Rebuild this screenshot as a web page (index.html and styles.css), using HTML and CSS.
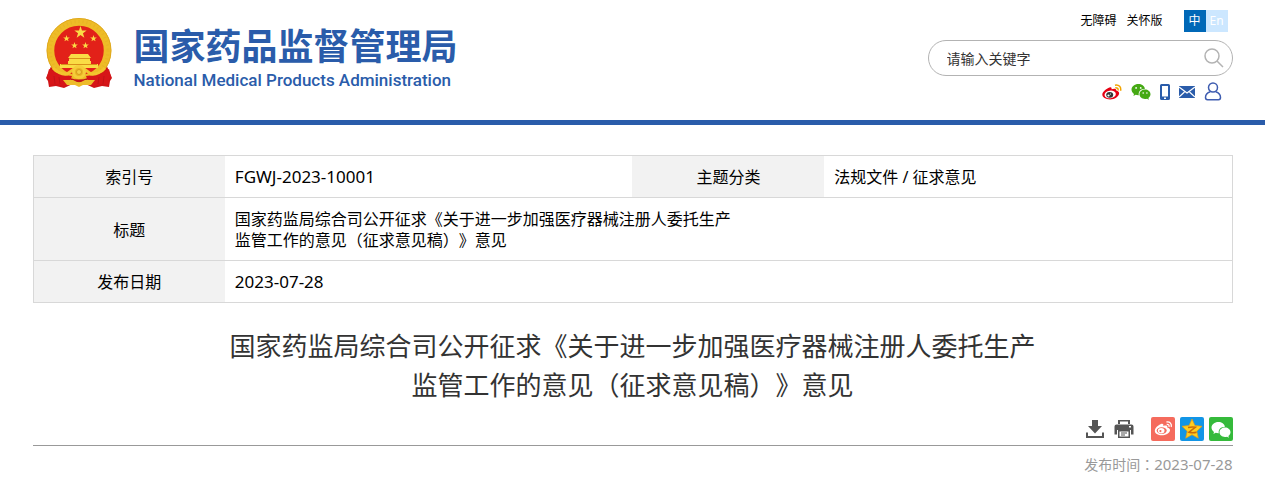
FILE: index.html
```html
<!DOCTYPE html>
<html lang="zh-CN">
<head>
<meta charset="utf-8">
<meta name="viewport" content="width=device-width, initial-scale=1">
<title>国家药品监督管理局</title>
<link rel="stylesheet" href="styles.css">
</head>
<body>
<svg class="sprite" aria-hidden="true">
  <symbol id="star" viewBox="-10 -10 20 20"><path d="M0-10 2.3-3.2 9.5-3.1 3.8 1.2 5.9 8.1 0 4-5.9 8.1-3.8 1.2-9.5-3.1-2.3-3.2z"/></symbol>
  <symbol id="wechat" viewBox="0 0 20 17">
    <path fill="currentColor" d="M7.400 1C3.500 1 .5 3.500.5 6.600c0 1.800 1 3.300 2.500 4.400l-.6 2 2.300-1.200c.8.300 1.700.4 2.600.4h.5C7 8.500 10 5.700 14 5.700 13.400 3 10.700 1 7.400 1z"/>
    <path fill="currentColor" d="M19.500 11.300c0-2.600-2.500-4.700-5.500-4.700s-5.500 2.100-5.500 4.700S11 16 14 16c.7 0 1.400-.1 2-.3l1.900 1-.5-1.700c1.300-.9 2.100-2.200 2.100-3.700z"/>
    <g class="eyes"><circle cx="5.100" cy="4.900" r=".9"/><circle cx="9.700" cy="4.900" r=".9"/><circle cx="12.200" cy="10" r=".8"/><circle cx="15.900" cy="10" r=".8"/></g>
  </symbol>
</svg>

<header class="site-header">
  <div class="wrap header-row">
    <a class="brand" href="#">
      <svg class="emblem" viewBox="0 0 66 70" aria-hidden="true">
        <path fill="#cf1417" d="M6 46 0 60l2 3 1 6 7-1 8 2 15-7 15 7 8-2 7 1 1-6 2-3-6-14z"/>
        <circle cx="33" cy="32.500" r="28.500" fill="#e22119" stroke="#eebc27" stroke-width="7.500"/>
        <circle cx="33" cy="32.500" r="32" fill="none" stroke="#dfa81e" stroke-width="1"/>
        <circle cx="33" cy="32.500" r="29" fill="none" stroke="#d9a01a" stroke-width="3" stroke-dasharray="1 3" opacity=".25"/>
        <g fill="#fadc45">
          <use href="#star" x="28" y="8" width="13" height="13"/>
          <use href="#star" x="17" y="17" width="7" height="7"/>
          <use href="#star" x="44" y="17" width="7" height="7"/>
          <use href="#star" x="25" y="24" width="7" height="7"/>
          <use href="#star" x="36" y="24" width="7" height="7"/>
          <path d="M25 36h17l3 4H22zM23 41h21v2H23zM22 43h23v3h7v4H14v-4h8z"/>
        </g>
        <path stroke="#d99119" stroke-width="1" d="M23 40.500h21M15 46.500h36"/>
        <path fill="#d71518" d="m3 51 6 3 9 3 8 1-3 8-5 2-8-2-6 1-1-6-2-2zM63 51l-6 3-9 3-8 1 3 8 5 2 8-2 6 1 1-6 2-2z"/>
        <path fill="none" stroke="#f3c42e" stroke-width="3" d="M7 50q7 7 14 6l7-5M59 50q-7 7-14 6l-7-5"/>
        <circle cx="33" cy="54" r="5.500" fill="#e9b524" stroke="#f5cd3a" stroke-width="3"/>
        <circle cx="33" cy="54" r="2.500" fill="#f5cf42" stroke="#d89c1d"/>
        <path fill="#c41518" d="M24 60q9 3 18 0l-2 4H26z"/>
        <path fill="#eebc2b" d="m17 62 10 0 6 3 6-3h10l-4 5-8 0-4 2-4-2-8 0z"/>
        <path fill="none" stroke="#b01116" stroke-width=".6" d="m8 58 1 8M13 59l1 7M58 58l-1 8M53 59l-1 7"/>
      </svg>
      <span class="brand-text">
        <span class="brand-cn">国家药品监督管理局</span>
        <span class="brand-en">National Medical Products Administration</span>
      </span>
    </a>
    <div class="tools">
      <nav class="top-links">
        <a href="#">无障碍</a>
        <a href="#">关怀版</a>
        <span class="lang"><a class="lang-cn" href="#">中</a><a class="lang-en" href="#">En</a></span>
      </nav>
      <form class="search">
        <input class="search-input" type="text" placeholder="请输入关键字" aria-label="请输入关键字">
        <button class="search-btn" type="button" aria-label="搜索">
          <svg width="20" height="20" viewBox="0 0 20 20" fill="none" stroke="#b3b3b3" stroke-width="1.500"><circle cx="8" cy="8" r="7"/><path d="m13 13 6 6"/></svg>
        </button>
      </form>
      <div class="social">
        <a href="#" aria-label="微博"><svg width="20" height="16" viewBox="0 0 20 16">
          <path fill="#e60012" d="M7.500 3.500C9 2.900 10 3.600 9.500 5.300c2.500-1 5-.9 4.800 1.300 2 .5 3 1.500 2.800 3-.4 3.400-4.600 5.900-9 5.900S.3 13.500.3 10.600c0-2.700 4-6.100 7.200-7.100z"/>
          <ellipse cx="8.200" cy="10.500" rx="5.700" ry="3.800" fill="#fff" transform="rotate(-8 8 10.500)"/>
          <ellipse cx="7.700" cy="10.800" rx="3.500" ry="2.900" fill="#333"/><circle cx="6.500" cy="11.500" r="1.100" fill="#fff"/><circle cx="8.500" cy="10" r=".6" fill="#fff"/>
          <path fill="none" stroke="#f2a400" stroke-width="1.500" d="M13 1.200c4-.8 6.500 2 5.500 5.600M13.300 3.800c2-.3 3.200.9 2.700 2.700"/>
        </svg></a>
        <a class="green" href="#" aria-label="微信"><svg width="20" height="17"><use href="#wechat"/></svg></a>
        <a href="#" aria-label="移动客户端"><svg width="10" height="16" viewBox="0 0 10 16"><path fill="#2a5caa" fill-rule="evenodd" d="M1.500 0h7Q10 0 10 1.500v13Q10 16 8.500 16h-7Q0 16 0 14.500v-13Q0 0 1.500 0zM2 2v10.500h6V2zM4 13.500V15h2v-1.500z"/></svg></a>
        <a href="#" aria-label="邮箱"><svg width="16" height="12" viewBox="0 0 16 12"><path fill="#2a5caa" d="M0 0h16v12H0z"/><path fill="none" stroke="#fff" stroke-width="1.200" d="m0 1 8 6 8-6M0 11l5.500-5M16 11l-5.500-5"/></svg></a>
        <a href="#" aria-label="个人中心"><svg width="18" height="19" viewBox="0 0 18 19" fill="none" stroke="#3f5db0" stroke-width="1.500"><circle cx="9" cy="5.500" r="4.500"/><path d="M6.300 9.700C3.500 10.500 1.500 12.500 1.500 15.500c0 1.500.8 2.200 2 2.200h11c1.200 0 2-.7 2-2.200 0-3-2-5-4.800-5.800"/></svg></a>
      </div>
    </div>
  </div>
</header>

<main class="wrap">
  <table class="info">
    <colgroup><col class="col-label"><col class="col-value"><col class="col-label"><col class="col-value"></colgroup>
    <tbody>
      <tr><th scope="row">索引号</th><td class="latin">FGWJ-2023-10001</td><th scope="row">主题分类</th><td>法规文件 / 征求意见</td></tr>
      <tr><th scope="row">标题</th><td colspan="3">国家药监局综合司公开征求《关于进一步加强医疗器械注册人委托生产<br>监管工作的意见（征求意见稿）》意见</td></tr>
      <tr><th scope="row">发布日期</th><td class="latin" colspan="3">2023-07-28</td></tr>
    </tbody>
  </table>

  <h1 class="title">国家药监局综合司公开征求《关于进一步加强医疗器械注册人委托生产<br>监管工作的意见（征求意见稿）》意见</h1>

  <div class="actions">
    <div class="doc-actions">
      <button type="button" aria-label="下载"><svg width="20" height="20" viewBox="0 0 20 20" fill="#555"><path d="M7 1h6v6h4l-7 7.500L3 7h4z"/><path d="M1 13.500h2V17h14v-3.500h2V19H1z"/></svg></button>
      <button type="button" aria-label="打印"><svg width="20" height="20" viewBox="0 0 20 20" fill="#555"><path fill-rule="evenodd" d="M4 1h12v4H4zM6 2.500V5h8V2.500z"/><path fill-rule="evenodd" d="M2.500 5.500h15Q19.500 5.500 19.500 7.500v8H17V11H3v4.500H.5v-8q0-2 2-2zM15 7v1.500h2V7z"/><path fill-rule="evenodd" d="M4 11h12v8H4zM5.500 12.500v5h9v-5z"/><path d="M7 13.500h6v1H7zM7 15.500h4v1H7z"/></svg></button>
    </div>
    <div class="share">
      <a class="share-weibo" href="#" aria-label="分享到微博"><svg width="24" height="24" viewBox="0 0 24 24">
        <path fill="#fff" d="M10 7c1.800-.7 2.800.1 2.300 2 2.500-.9 4.500-.6 4 1.500 2 .6 3 1.500 2.700 3-.5 3-4.500 4.800-8.200 4.800-3.800 0-7-1.600-7-4.500C3.800 11.300 7 8 10 7z"/>
        <ellipse cx="10.700" cy="13.600" rx="5" ry="3.300" fill="#f56b5d"/><ellipse cx="10.200" cy="13.700" rx="3.300" ry="2.700" fill="#fff"/><circle cx="9.400" cy="14.100" r="1.100" fill="#f56b5d"/>
        <path fill="none" stroke="#fff" stroke-width="1.300" d="M15.500 5c3.500-.5 5.500 1.900 4.700 5M15.700 7.400c1.800-.2 2.700.8 2.300 2.400"/>
      </svg></a>
      <a class="share-qzone" href="#" aria-label="分享到QQ空间"><svg width="24" height="24" viewBox="0 0 24 24">
        <path fill="#ffce1f" stroke="#e79b12" stroke-width=".7" d="m12 2 2.900 6.500 7.100.8-5.200 4.900 1.500 7L12 17.700l-6.300 3.500 1.500-7L2 9.300l7.100-.8z"/>
        <path fill="none" stroke="#c96b09" stroke-width="1.500" d="M8 10.500c3-.8 5-.8 7.500-.3l-6.500 5c2.500.7 5 .7 7.500 0"/>
      </svg></a>
      <a class="share-wechat" href="#" aria-label="分享到微信"><svg width="20" height="17"><use href="#wechat"/></svg></a>
    </div>
  </div>
  <p class="pubtime">发布时间<span class="colon" lang="zh-TW">：</span><time class="pubdate" datetime="2023-07-28">2023-07-28</time></p>
</main>
</body>
</html>
```
FILE: styles.css
```css
* { box-sizing: border-box; }
body {
  margin: 0;
  background: #fff;
  color: #000;
  font-family: "Noto Sans", "Noto Sans CJK SC", sans-serif;
  font-size: 16px;
  text-spacing-trim: space-all;
}
a { color: inherit; text-decoration: none; }
svg { display: block; }
button { padding: 0; border: 0; background: none; cursor: pointer; }
.sprite { position: absolute; width: 0; height: 0; }
.wrap { max-width: 1200px; margin: 0 auto; }

.site-header { border-bottom: 5px solid #2a5caa; }
.header-row { display: flex; justify-content: space-between; min-height: 120px; }
.brand { display: flex; align-items: flex-start; gap: 22px; padding: 18px 0 0 13px; color: #2a5caa; }
.emblem { width: 66px; height: 70px; }
.brand-text { display: flex; flex-direction: column; }
.brand-cn { font: 700 36px/52px "Noto Sans CJK SC", sans-serif; }
.brand-en { font: 500 17px/20px Roboto, sans-serif; }

.tools { display: flex; flex-direction: column; align-items: flex-end; width: 305px; padding-top: 10px; }
.top-links { display: flex; align-items: center; gap: 10px; padding-right: 5px; font-size: 12px; line-height: 22px; }
.lang { display: flex; margin-left: 11px; color: #fff; text-align: center; }
.lang a { width: 22px; }
.lang-cn { background: #0068b7; }
.lang-en { background: #cce7ff; }
.search {
  display: flex;
  align-items: center;
  width: 100%;
  height: 36px;
  margin-top: 8px;
  padding: 0 8px 0 18px;
  border: 1px solid #b3b3b3;
  border-radius: 18px;
}
.search-input { flex: 1; min-width: 0; padding: 0; border: 0; outline: 0; background: none; font: inherit; font-size: 14px; }
.search-input::placeholder { color: #333; opacity: 1; }
.social { display: flex; align-items: center; gap: 9px; margin-top: 6px; padding-right: 11px; }
.green { color: #45a914; }
.eyes { fill: #fff; }

.info { width: 100%; margin-top: 30px; border: 1px solid #d8d8d8; border-collapse: collapse; table-layout: fixed; line-height: 21px; }
.col-label { width: 16%; }
.col-value { width: 34%; }
.info tr { border-bottom: 1px solid #d8d8d8; }
.info th { padding: 11px 10px 9px; background: #f2f2f2; font-weight: 400; }
.info td { padding: 11px 10px 9px; }
.info .latin { padding: 10px; font-size: 17px; }

.title { margin: 24px 0 12px; color: #333; font-size: 26px; font-weight: 400; line-height: 39px; text-align: center; }

.actions { display: flex; justify-content: flex-end; align-items: center; gap: 17px; padding-bottom: 4px; border-bottom: 1px solid #999; }
.doc-actions { display: flex; gap: 9px; }
.share { display: flex; gap: 5px; }
.share a { display: flex; align-items: center; justify-content: center; width: 24px; height: 24px; border-radius: 2px; color: #fff; }
.share-weibo { background: #f56b5d; }
.share-qzone { background: #1295e6; }
.share-wechat { background: #35ba3b; }
.share-wechat .eyes { fill: #35ba3b; }

.pubtime { margin: 7px 0 0; color: #999; font-size: 14px; line-height: 22px; text-align: right; }
.pubdate { font-size: 15px; }
.colon { font-family: "Noto Sans CJK TC", sans-serif; }
```
